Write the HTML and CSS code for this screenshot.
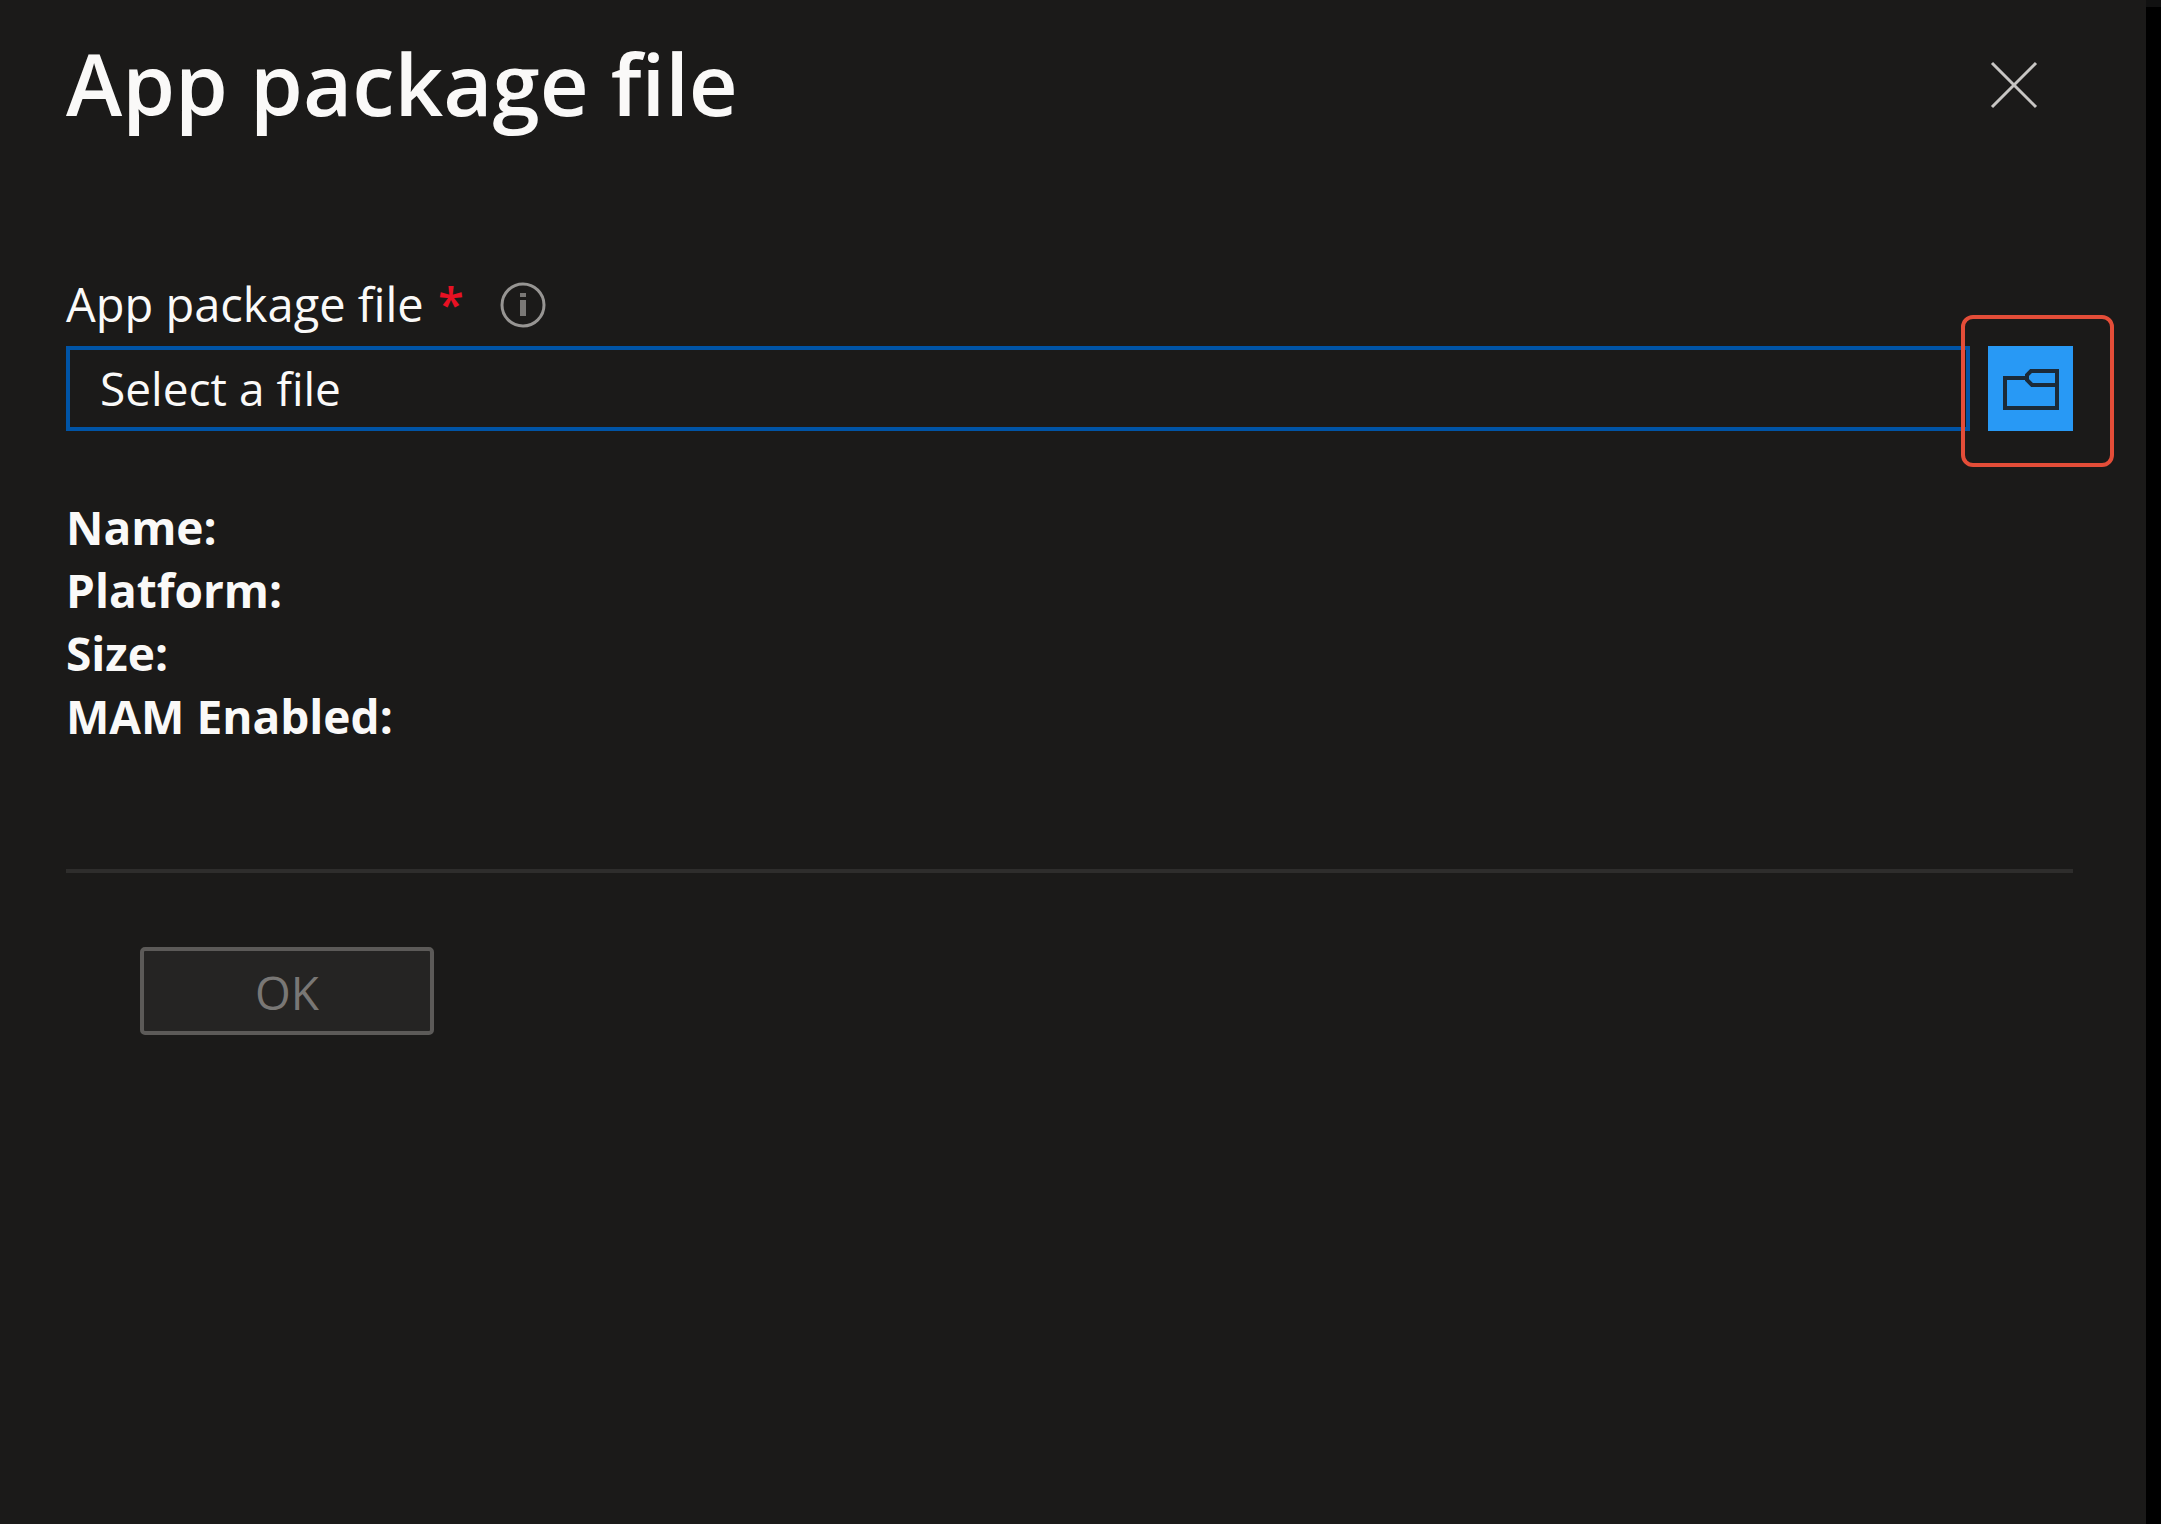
FILE: index.html
```html
<!DOCTYPE html>
<html lang="en">
<head>
    <meta charset="UTF-8">
    <meta name="viewport" content="width=device-width, initial-scale=1.0">
    <title>App package file</title>
    <link rel="stylesheet" href="styles.css">
</head>

<body>
    <main class="panel">
        <header class="panel-header">
            <h1>App package file</h1>
            <button class="close" type="button" aria-label="Close">
                <svg width="48" height="48" viewBox="0 0 48 48">
                    <path d="M2 2L46 46M46 2L2 46" stroke="#c8c6c4" stroke-width="3" fill="none"/>
                </svg>
            </button>
        </header>

        <form class="package-form">
            <!-- File picker -->
            <div class="label-row">
                <label for="package-file">App package file <span class="required">*</span></label>
                <svg class="info" width="46" height="46" viewBox="0 0 46 46">
                    <circle cx="23" cy="23" r="21" stroke="#979593" stroke-width="3" fill="none"/>
                    <path d="M23 11V15M23 18V34" stroke="#7a7876" stroke-width="6"/>
                </svg>
            </div>
            <div class="file-row">
                <input id="package-file" class="file-input" type="text" placeholder="Select a file" readonly>
                <div class="browse-wrap">
                    <button class="browse" type="button" aria-label="Browse">
                        <svg width="85" height="85" viewBox="0 0 85 85">
                            <path d="M39 32H17V62H69V25H43L39 29V34L44 39H69" stroke="#1b2a38" stroke-width="4" fill="none"/>
                        </svg>
                    </button>
                    <span class="highlight"></span>
                </div>
            </div>

            <!-- Package details -->
            <ul class="details">
                <li>Name:</li>
                <li>Platform:</li>
                <li>Size:</li>
                <li>MAM Enabled:</li>
            </ul>

            <div class="form-footer">
                <button class="ok" type="submit" disabled>OK</button>
            </div>
        </form>
    </main>
</body>
</html>
```
FILE: styles.css
```css
/* General styles */
* {
    box-sizing: border-box;
}

body {
    margin: 0;
    min-height: 100vh;
    display: flex;
    background: linear-gradient(#111111 7px, #000000 7px);
    color: #faf9f8;
    font-family: "Open Sans", "Noto Sans", sans-serif;
    font-size: 46px;
}

button,
input {
    font: inherit;
    color: inherit;
    padding: 0;
    margin: 0;
}

svg {
    display: block;
}

.panel {
    flex: 1;
    margin-right: 15px;
    padding: 24px 73px 24px 66px;
    background-color: #1b1a19;
}

/* Header */
.panel-header {
    display: flex;
    align-items: center;
    justify-content: space-between;
    height: 122px;
    padding-right: 35px;
}

h1 {
    margin: 0;
    font-size: 85px;
    font-weight: 600;
    line-height: 118px;
    padding-bottom: 4px;
}

.close {
    border: none;
    background: none;
    cursor: pointer;
}

/* File picker */
.package-form {
    margin-top: 128px;
}

.label-row {
    display: flex;
    align-items: center;
    gap: 36px;
    height: 62px;
    margin-bottom: 10px;
}

.label-row label {
    font-size: 47px;
    line-height: 60px;
    padding-bottom: 2px;
}

.required {
    margin-left: 2px;
    color: #e81123;
    font-weight: 600;
}

.file-row {
    display: flex;
    gap: 18px;
}

.file-input {
    flex: 1;
    min-width: 0;
    height: 85px;
    padding: 0 30px 2px;
    border: 4px solid #0054a6;
    border-radius: 0;
    background-color: #1b1a19;
    outline: none;
}

.file-input::placeholder {
    color: #faf9f8;
    opacity: 1;
}

.browse-wrap {
    position: relative;
}

.browse {
    display: block;
    width: 85px;
    height: 85px;
    border: none;
    background-color: #2899f5;
    cursor: pointer;
}

/* Red frame around the browse button */
.highlight {
    position: absolute;
    inset: -31px -41px -36px -27px;
    border: 4px solid #e44d38;
    border-radius: 12px;
    pointer-events: none;
}

/* Package details */
.details {
    list-style: none;
    margin: 65px 0 0;
    padding: 0;
    font-weight: 700;
    line-height: 63px;
}

.form-footer {
    margin-top: 121px;
    padding: 74px 74px 0;
    border-top: 4px solid #2e2d2c;
}

.ok {
    width: 294px;
    height: 88px;
    padding-top: 2px;
    border: 4px solid #5c5a58;
    border-radius: 5px;
    background-color: #252423;
    color: #797775;
}
```
